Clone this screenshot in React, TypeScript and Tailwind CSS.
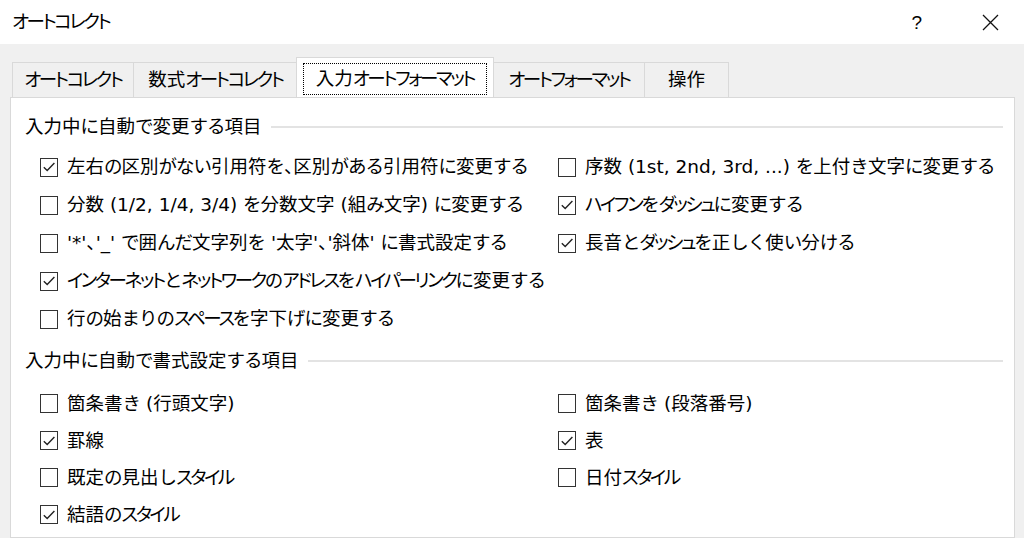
import React from "react";

const FONT = "font-['DejaVu_Sans','Noto_Sans_CJK_JP',sans-serif]";

// Meiryo UI draws kana condensed; tighten kana runs to get the same widths
const Jp = ({ text }: { text: string }) => {
  const parts = text
    .split(/([\u30A0-\u30FF]+|[\u3040-\u309F]+|[\u3000-\u303F]+)/)
    .filter((p) => p.length > 0);
  return (
    <>
      {parts.map((p, i) => {
        if (/^[\u30A0-\u30FF]+$/.test(p))
          return (
            <span key={i} className="[font-feature-settings:'palt'] tracking-[-2.4px]">
              {p}
            </span>
          );
        if (/^[\u3040-\u309F]+$/.test(p))
          return (
            <span key={i} className="tracking-[-1px]">
              {p}
            </span>
          );
        if (/^[\u3000-\u303F]+$/.test(p))
          return (
            <span key={i} className="[font-feature-settings:'palt']">
              {p}
            </span>
          );
        return <span key={i}>{p}</span>;
      })}
    </>
  );
};

const tabs = [
  { label: "オートコレクト", width: "w-[122px]" },
  { label: "数式オートコレクト", width: "w-[165px]" },
  { label: "入力オートフォーマット", width: "w-[198px]", active: true },
  { label: "オートフォーマット", width: "w-[152px]" },
  { label: "操作", width: "w-[85px]" },
];

const replaceLeft = [
  { label: "左右の区別がない引用符を、区別がある引用符に変更する", checked: true },
  { label: "分数 (1/2, 1/4, 3/4) を分数文字 (組み文字) に変更する", checked: false },
  { label: "'*'、'_' で囲んだ文字列を '太字'、'斜体' に書式設定する", checked: false },
  { label: "インターネットとネットワークのアドレスをハイパーリンクに変更する", checked: true },
  { label: "行の始まりのスペースを字下げに変更する", checked: false },
];

const replaceRight = [
  { label: "序数 (1st, 2nd, 3rd, ...) を上付き文字に変更する", checked: false },
  { label: "ハイフンをダッシュに変更する", checked: true },
  { label: "長音とダッシュを正しく使い分ける", checked: true },
];

const formatLeft = [
  { label: "箇条書き (行頭文字)", checked: false },
  { label: "罫線", checked: true },
  { label: "既定の見出しスタイル", checked: false },
  { label: "結語のスタイル", checked: true },
];

const formatRight = [
  { label: "箇条書き (段落番号)", checked: false },
  { label: "表", checked: true },
  { label: "日付スタイル", checked: false },
];

const CheckBox = ({ checked }: { checked: boolean }) => (
  <span className="flex items-center justify-center w-[18px] h-[19px] border-[1.5px] border-[#333333] bg-white shrink-0">
    {checked && (
      <svg width="14" height="14" viewBox="0 0 14 14" fill="none">
        <path d="M1.8 7.2 L5.2 10.6 L12.4 3.0" stroke="#222222" strokeWidth="1.4" />
      </svg>
    )}
  </span>
);

const Option = ({ label, checked, h }: { label: string; checked: boolean; h: string }) => (
  <div className={`flex items-center gap-[9px] ${h}`}>
    <CheckBox checked={checked} />
    <span className="text-[18.5px] leading-none text-black whitespace-nowrap pt-[1px]">
      <Jp text={label} />
    </span>
  </div>
);

const Heading = ({ title }: { title: string }) => (
  <div className="flex items-center h-[30px] pr-[11px]">
    <span className="text-[18.5px] leading-none text-black whitespace-nowrap pt-[1px]">
      <Jp text={title} />
    </span>
    <div className="flex-1 h-[2px] bg-[#e3e3e3] ml-[9px]" />
  </div>
);

export default function App() {
  return (
    <div className={`w-[1024px] h-[538px] overflow-hidden bg-[#f0f0f0] flex flex-col ${FONT}`}>
      {/* Title bar */}
      <div className="h-[44px] bg-white flex items-center pl-[12px] shrink-0">
        <span className="text-[18.5px] leading-none text-black">
          <Jp text="オートコレクト" />
        </span>
        <div className="ml-auto flex items-center">
          <span className="text-[19px] leading-none text-black mr-[60px] font-['Liberation_Sans',sans-serif]">?</span>
          <svg width="17" height="17" viewBox="0 0 17 17" className="mr-[25px]">
            <path d="M1 1 L16 16 M16 1 L1 16" stroke="#111111" strokeWidth="1.3" />
          </svg>
        </div>
      </div>

      {/* Body */}
      <div className="flex-1 flex flex-col pt-[14px] pl-[10px] pr-[9px] min-h-0">
        {/* Tab strip */}
        <div className="flex items-end pl-[2px] h-[39px] shrink-0 relative z-10">
          {tabs.map((tab) =>
            tab.active ? (
              <div
                key={tab.label}
                className={`${tab.width} h-[40px] -mx-[1px] bg-white border-l border-t border-r border-[#d9d9d9] flex items-start justify-center pt-[5px]`}
              >
                <span className="h-[32px] w-[184px] border border-dotted border-black flex items-center justify-center text-[18.5px] leading-none text-black whitespace-nowrap">
                  <Jp text={tab.label} />
                </span>
              </div>
            ) : (
              <div
                key={tab.label}
                className={`${tab.width} h-[35px] border-l border-t border-r border-[#d9d9d9] -mr-px flex items-center justify-center text-[18.5px] leading-none text-black whitespace-nowrap`}
              >
                <Jp text={tab.label} />
              </div>
            )
          )}
        </div>

        {/* Panel */}
        <div className="flex-1 bg-white border border-[#d9d9d9] pl-[14px] pt-[14px]">
          <Heading title="入力中に自動で変更する項目" />
          <div className="flex mt-[6px] pl-[15px]">
            <div className="w-[518px] flex flex-col">
              {replaceLeft.map((o) => (
                <Option key={o.label} label={o.label} checked={o.checked} h="h-[38px]" />
              ))}
            </div>
            <div className="flex flex-col">
              {replaceRight.map((o) => (
                <Option key={o.label} label={o.label} checked={o.checked} h="h-[38px]" />
              ))}
            </div>
          </div>

          <div className="mt-[8px]">
            <Heading title="入力中に自動で書式設定する項目" />
          </div>
          <div className="flex mt-[9px] pl-[15px]">
            <div className="w-[518px] flex flex-col">
              {formatLeft.map((o) => (
                <Option key={o.label} label={o.label} checked={o.checked} h="h-[37px]" />
              ))}
            </div>
            <div className="flex flex-col">
              {formatRight.map((o) => (
                <Option key={o.label} label={o.label} checked={o.checked} h="h-[37px]" />
              ))}
            </div>
          </div>
        </div>
      </div>
    </div>
  );
}
